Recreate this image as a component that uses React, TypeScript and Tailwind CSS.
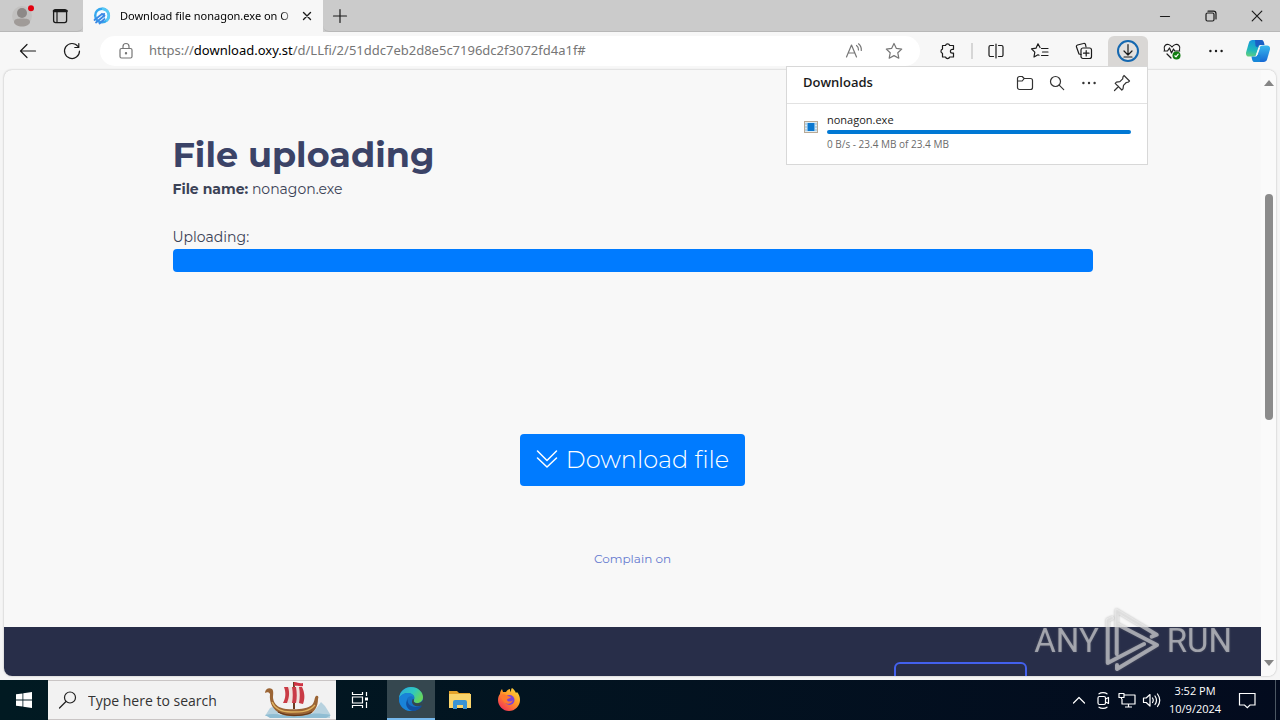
import type { ReactNode } from "react";

const stroke = {
  fill: "none",
  stroke: "currentColor",
  strokeWidth: 1.2,
  strokeLinecap: "round" as const,
  strokeLinejoin: "round" as const,
};

const Icon = ({ children, className = "size-5" }: { children: ReactNode; className?: string }) => (
  <svg viewBox="0 0 20 20" className={className} {...stroke} aria-hidden="true">
    {children}
  </svg>
);

const ToolButton = ({ label, children }: { label: string; children: ReactNode }) => (
  <button aria-label={label} className="flex h-8 w-11 shrink-0 items-center justify-center">
    {children}
  </button>
);

const Dots = () => (
  <Icon>
    <g fill="currentColor" stroke="none">
      <circle cx="4.4" cy="10" r="1.2" />
      <circle cx="10" cy="10" r="1.2" />
      <circle cx="15.6" cy="10" r="1.2" />
    </g>
  </Icon>
);

const TabBar = () => (
  <header className="flex h-8 shrink-0 bg-[#cbcbcb] text-[#1b1b1b]">
    <div className="flex w-[83px] items-center rounded-br-md border-b border-[#b8b8b8]">
      <button aria-label="Profile" className="ml-3 w-6">
        <svg viewBox="0 0 24 24" className="h-6 w-6" aria-hidden="true">
          <circle cx="10" cy="12" r="10" fill="#c2c1c0" />
          <circle cx="10" cy="9" r="5" fill="#8d8987" />
          <path d="M2 18c0-3 3-3.500 8-3.500s8 .5 8 3.500c0 2.500-4 4.500-8 4.500S2 20.500 2 18Z" fill="#a09b98" />
          <circle cx="19" cy="4.200" r="3" fill="#e3000f" />
        </svg>
      </button>
      <button aria-label="Tab actions" className="ml-3.5">
        <Icon>
          <rect x="3.600" y="3.600" width="13" height="13" rx="2" strokeWidth="1.300" />
          <path d="M4 5h12.500" strokeWidth="2.600" />
          <path d="M7 6v10" />
        </Icon>
      </button>
    </div>
    <div className="flex w-60 items-center bg-[#f7f7f7] pl-2.5">
      <svg viewBox="0 0 18 18" className="size-[18px]" aria-hidden="true">
        <circle cx="9" cy="8.500" r="6.800" fill="#f3fbff" stroke="#35a8ee" strokeWidth="2.400" />
        <path d="M9 1.700a6.800 6.800 0 0 1 4 12.300" fill="none" stroke="#55c8f5" strokeWidth="2.400" />
        <path d="M1.500 13 9 7M3 15.500l8.500-7M6.500 16.500l5-4.500" stroke="#3c88e4" strokeWidth="1.800" strokeLinecap="round" />
        <path d="m8 6.500 4-.5L11.500 11Z" fill="#3c88e4" />
      </svg>
      <span className="ml-2 w-[176px] overflow-hidden pl-px font-['Noto_Sans'] text-[11px] whitespace-nowrap text-black [mask-image:linear-gradient(to_right,black_92%,transparent)]">
        Download file nonagon.exe on O
      </span>
      <button aria-label="Close tab" className="ml-0.5">
        <Icon>
          <path d="m6.500 6.500 7 7m0-7-7 7" strokeWidth="1.400" />
        </Icon>
      </button>
    </div>
    <div className="flex flex-1 items-center rounded-bl-md border-b border-[#b8b8b8]">
      <button aria-label="New tab" className="ml-[7px]">
        <Icon>
          <path d="M10 3.500v13M3.500 10h13" />
        </Icon>
      </button>
      <div className="ml-auto flex">
        <button aria-label="Minimize" className="flex w-[46px] justify-center">
          <Icon>
            <path d="M5.500 10.500h9" />
          </Icon>
        </button>
        <button aria-label="Restore" className="flex w-[46px] justify-center">
          <Icon>
            <rect x="5" y="7" width="8" height="8" rx="1.500" />
            <path d="M7 5.200h5.500a2.500 2.500 0 0 1 2.500 2.500V13" />
          </Icon>
        </button>
        <button aria-label="Close" className="flex w-[46px] justify-center">
          <Icon>
            <path d="m5.200 5.200 9.600 9.600m0-9.600-9.600 9.600" />
          </Icon>
        </button>
      </div>
    </div>
  </header>
);

const DownloadsPanel = () => (
  <section
    aria-label="Downloads"
    className="absolute top-[30px] right-0 z-10 w-[362px] border border-[#d8d8d8] bg-white text-left text-[#1b1b1b]"
  >
    <div className="flex h-[37px] items-center border-b border-[#e2e2e2] pr-[15px] pb-1 pl-4">
      <h2 className="flex-1 text-[13px] font-semibold">Downloads</h2>
      <div className="flex gap-3 text-[#333]">
        <button aria-label="Open downloads folder">
          <Icon>
            <path d="M2.500 5.500a2 2 0 0 1 2-2h2.700l2 2h6.300a2 2 0 0 1 2 2v7a2 2 0 0 1-2 2h-11a2 2 0 0 1-2-2ZM2.500 8h4.700l2-2.500" />
          </Icon>
        </button>
        <button aria-label="Search downloads">
          <Icon>
            <circle cx="8.500" cy="8.500" r="5" />
            <path d="m12.200 12.200 4.500 4.500" />
          </Icon>
        </button>
        <button aria-label="More options">
          <Dots />
        </button>
        <button aria-label="Pin downloads" className="pl-px">
          <Icon>
            <path d="m12 2.500 5.500 5.500-1.200 1.200-2 .3-2.800 2.800-.5 3.500-1.200 1.200-6.600-6.600 1.200-1.200 3.500-.5 2.800-2.800.3-2ZM6.500 13.500l-4 4" />
          </Icon>
        </button>
      </div>
    </div>
    <div className="flex items-start gap-2 pt-2 pr-4 pb-3 pl-4">
      <svg viewBox="0 0 16 14" className="mt-2 h-3.5 w-4" aria-hidden="true">
        <rect x="1.500" y="1.500" width="13" height="11" fill="#dcecf5" stroke="#b9a995" />
        <path d="M2 4h2M2 7h2M2 10h2M12 4h2M12 7h2M12 10h2" stroke="#8fb5cf" />
        <rect x="4.500" y="3" width="7" height="8" fill="#0b78d0" />
      </svg>
      <div className="flex-1">
        <p className="text-[11px] leading-4">nonagon.exe</p>
        <div role="progressbar" aria-label="nonagon.exe" aria-valuenow={100} className="mt-0.5 h-1 rounded-full bg-[#0078d4]" />
        <p className="mt-0.5 text-[10px] leading-4 text-[#6b6b6b]">0 B/s - 23.4 MB of 23.4 MB</p>
      </div>
    </div>
  </section>
);

const Toolbar = () => (
  <nav className="flex h-[38px] shrink-0 items-center bg-[#f7f7f7] pr-0.5 pl-1.5 text-[#1b1b1b]">
    <ToolButton label="Back">
      <Icon>
        <path d="M17.500 10h-15m6.500-6.500L2.500 10 9 16.500" />
      </Icon>
    </ToolButton>
    <ToolButton label="Refresh">
      <Icon>
        <path d="M16 5.500A7.500 7.500 0 1 0 17.500 10M16.800 2.500v4h-4" />
      </Icon>
    </ToolButton>
    <div className="mx-1.5 flex h-[30px] flex-1 items-center rounded-full bg-white text-[#767676]">
      <button aria-label="Site information" className="ml-4">
        <Icon>
          <rect x="4" y="7.500" width="12" height="9.500" rx="1.500" />
          <path d="M7 7.500V5.500a3 3 0 0 1 6 0v2" />
          <circle cx="10" cy="12.200" r=".6" fill="currentColor" />
        </Icon>
      </button>
      <label className="relative ml-3 flex-1 pl-px font-['Noto_Sans'] text-[13px] whitespace-nowrap">
        <span>
          https://<span className="text-black">download.oxy.st</span>/d/LLfi/2/51ddc7eb2d8e5c7196dc2f3072fd4a1f#
        </span>
        <input type="text" aria-label="Address" className="absolute inset-0 bg-transparent outline-none" />
      </label>
      <button aria-label="Read aloud" className="mr-5">
        <Icon>
          <path d="M2.500 16 7.500 4l5 12M4.300 12h6.400M12.500 4.500a5 5 0 0 1 2 4.500M14.500 2.800a8 8 0 0 1 2.800 6.700" />
        </Icon>
      </button>
      <button aria-label="Add to favorites" className="mr-4">
        <Icon>
          <path d="m10 2.500 2.400 4.900 5.300.7-3.900 3.700 1 5.400-4.800-2.600-4.800 2.600 1-5.400-3.900-3.700 5.300-.7Z" />
        </Icon>
      </button>
    </div>
    <ToolButton label="Extensions">
      <Icon>
        <path d="M7.500 4.500a2.200 2.200 0 0 1 4.200 0h3.800v3.800h-1.200a1.900 1.900 0 0 0 0 3.800h1.200V16h-3.800a2.200 2.200 0 0 1-4.200 0H4.500v-3.700a2.200 2.200 0 0 1 0-4.200V4.500Z" />
      </Icon>
    </ToolButton>
    <div className="mx-px h-4 w-0.5 bg-[#d6d6d6]" />
    <ToolButton label="Split screen">
      <Icon>
        <path d="M10 3v14M7.500 4.500h-3a1.500 1.500 0 0 0-1.500 1.500v8a1.500 1.500 0 0 0 1.500 1.500h3M12.500 4.500h3A1.500 1.500 0 0 1 17 6v8a1.500 1.500 0 0 1-1.500 1.500h-3" />
      </Icon>
    </ToolButton>
    <ToolButton label="Favorites">
      <Icon>
        <path d="M11.500 7.500H18M12.500 11H18M11.500 14.500H18M10 6.500 8 2.800 6 7.200l-4.500.7 3.300 3.300L4 16l4-2.200 1 .5" />
      </Icon>
    </ToolButton>
    <ToolButton label="Collections">
      <Icon>
        <path d="M7 13.500 5 13l-2.500-7a1.500 1.500 0 0 1 1-2l6-1.500a1.500 1.500 0 0 1 2 1L12 6" />
        <rect x="7" y="7" width="10.500" height="10.500" rx="2" />
        <path d="M12.200 9.500v5.500M9.500 12.200H15" />
      </Icon>
    </ToolButton>
    <div className="relative mx-0.5">
      <button aria-label="Downloads" className="flex h-[30px] w-10 items-center justify-center rounded-t-md bg-[#d9d7d5]">
        <svg viewBox="0 0 24 24" className="size-6" {...stroke} aria-hidden="true">
          <circle cx="12" cy="12" r="10" fill="#e3e1df" stroke="#1568b0" strokeWidth="2" />
          <path d="M12 5.500v10M8 12l4 4 4-4M8 18h8" />
        </svg>
      </button>
      <DownloadsPanel />
    </div>
    <ToolButton label="Browser essentials">
      <Icon>
        <path d="M2.500 9C1 5 4 3 6.500 3.500 8.500 4 10 6 10 6s1.500-2 3.500-2.500C16 3 19 5 17.500 9M2 10h3.500l2-3 2 5 2-4 1.200 2h5M5 13l4 4" />
        <circle cx="14.500" cy="14.500" r="4" fill="#107c10" stroke="none" />
        <path d="m12.800 14.800 1.200 1 2.200-2.600" stroke="white" />
      </Icon>
    </ToolButton>
    <ToolButton label="Settings and more">
      <Dots />
    </ToolButton>
    <button aria-label="Copilot" className="flex w-10 justify-center">
      <svg viewBox="0 0 24 24" className="size-6" aria-hidden="true">
        <defs>
          <linearGradient id="pilotLeft" x1=".4" y1="0" x2=".2" y2="1">
            <stop offset="0" stopColor="#1593dc" />
            <stop offset=".6" stopColor="#20b9ba" />
            <stop offset="1" stopColor="#65cf7c" />
          </linearGradient>
          <linearGradient id="pilotRight" x1="0" y1="0" x2="0" y2="1">
            <stop offset="0" stopColor="#38b9ee" />
            <stop offset="1" stopColor="#1668d4" />
          </linearGradient>
        </defs>
        <path d="M6.500 1H15l-4.500 14c-.7 1.800-1.500 2.500-3.500 2.500H3c-2.500 0-3.500-2-2.800-4.500L2.800 4C3.500 1.800 4.500 1 6.500 1Z" fill="url(#pilotLeft)" />
        <path d="M9 1h6.500c2 0 2.500 2 3 5h-4c-1.500 0-2.500.8-3 2.500L9.500 7Z" fill="#1a5fc4" />
        <path d="M17.500 23H9l4.500-14c.7-1.800 1.500-2.500 3.500-2.500h4c2.500 0 3.500 2 2.800 4.500L21.200 20c-.7 2.200-1.700 3-3.700 3Z" fill="url(#pilotRight)" />
        <path d="M14 23H8.500c-2 0-2.500-2-3-5.500H9c1.500 0 2.500-.5 3-2l2.500 1Z" fill="#1787d8" />
        <path d="m12.500 8.500 1.500.5-2.500 7-1.500-.5Z" fill="#f7f7f7" />
      </svg>
    </button>
  </nav>
);

const Watermark = () => (
  <div
    aria-label="ANY RUN"
    className="pointer-events-none absolute right-11 bottom-1 flex items-center gap-1 pr-px font-['Roboto'] text-[33px] leading-none text-white/50 drop-shadow-[0_0_1px_#777]"
  >
    <span>ANY</span>
    <svg
      viewBox="0 0 60 64"
      className="h-16 w-[60px]"
      fill="none"
      stroke="currentColor"
      strokeWidth="4"
      strokeLinejoin="round"
      strokeLinecap="round"
      aria-hidden="true"
    >
      <path d="m48.700 28.700 5-2L13.700 2.700V46M13.700 16 54 37 14 61v-4M9 10l-4.300 2v43L41 36" />
    </svg>
    <span>RUN</span>
  </div>
);

const Page = () => (
  <div className="mx-1 mb-1 flex min-h-0 flex-1 overflow-hidden rounded-lg bg-[#f8f8f8] shadow-[0_0_2px_#aaa]">
    <div className="flex min-w-0 flex-1 flex-col font-['Montserrat','Inter',sans-serif]">
      <main className="mx-auto w-full max-w-[920px] flex-1 pt-[63px] text-[#3b4256]">
        <h1 className="text-[35px] leading-[44px] font-bold text-[#3b4367]">File uploading</h1>
        <p className="text-[14px] leading-6">
          <b>File name:</b> nonagon.exe
        </p>
        <p className="mt-6 text-[14px] leading-6">Uploading:</p>
        <div role="progressbar" aria-label="Uploading" aria-valuenow={100} className="h-[23px] rounded-sm bg-[#007bff]" />
        <div className="mt-[162px] flex flex-col items-center">
          <a href="#" className="flex h-[52px] items-center gap-2 rounded-sm bg-[#007bff] px-4 text-[24px] font-light text-white">
            <svg viewBox="0 0 22 22" className="size-[22px]" {...stroke} strokeWidth="1.500" aria-hidden="true">
              <path d="m1.500 2 9.500 9.500L20.500 2M1.500 9l9.500 9 9.500-9" />
            </svg>
            Download file
          </a>
          <a href="#" className="mt-[61px] text-[12px] leading-6 text-[#6478cf]">
            Complain on
          </a>
        </div>
      </main>
      <footer className="relative h-[49px] shrink-0 bg-[#282e49]">
        <div className="h-full overflow-hidden pt-[35px]">
          <button aria-label="Contact" className="mr-[234px] ml-auto block h-10 w-[133px] rounded-md border-2 border-[#4361ee]" />
        </div>
        <div className="absolute inset-y-0 -right-4 w-64">
          <Watermark />
        </div>
      </footer>
    </div>
    <div className="flex w-[15px] flex-col items-center bg-[#fafafa] pt-2.5 pb-2.5">
      <svg viewBox="0 0 10 6" className="h-1.5 w-2.5 shrink-0" aria-hidden="true">
        <path d="M0 6 5 0l5 6Z" fill="#858585" />
      </svg>
      <div className="mt-[108px] h-[226px] w-2 rounded-full bg-[#8b8b8b]" />
      <svg viewBox="0 0 10 6" className="mt-auto h-1.5 w-2.5 shrink-0" aria-hidden="true">
        <path d="M0 0h10L5 6Z" fill="#858585" />
      </svg>
    </div>
  </div>
);

const Ship = () => (
  <svg viewBox="0 0 68 38" className="h-[38px] w-[68px] shrink-0" aria-hidden="true">
    <path d="m48 33 9-12 4 4 5 8v4H46ZM1 35l5-8 7-3 2 11Z" fill="#b7d2df" />
    <path d="M1 34c12-3 22 2 33 0s23-2 33 0l-5 3H6Z" fill="#8fbdd3" />
    <path d="M30 1v27" stroke="#6b3c20" strokeWidth="2" />
    <path d="M30 1c4 0 5 2 9 1v3c-3 1-5-1-9 0Z" fill="#ce3444" />
    <path d="M20 6c6 1 12-1 18 0 3 6 3 12 1 17-6-2-13-1-20-1 3-5 3-11 1-16Z" fill="#f0e1dc" />
    <path d="M20 6h4c2 6 1 11-1 16h-4c3-5 3-11 1-16ZM28 6h4c1 6 1 11 0 16h-4c1-5 1-11 0-16ZM35 6h3c3 6 3 12 1 17l-4-1c1-5 1-11 0-16Z" fill="#c93b46" />
    <path d="M1 12c0-4 4-6 7-4 2 2 1 6 1 9 1 7 6 10 13 11 11 1 21 0 26-4 3-3 2-7 4-9 2-1 3 1 2 3 0 8-4 13-8 15-10 3-23 3-29 0-8-4-12-11-11-20-1-2-3-2-5-1Z" fill="#9b6535" />
    <path d="M8 21c3 7 9 10 19 10s18 0 24-7" fill="none" stroke="#e0b461" strokeWidth="1.300" />
    <path d="M14 31c8 4 25 5 34 0" fill="none" stroke="#65391c" strokeWidth="1.300" />
  </svg>
);

const Taskbar = () => (
  <footer className="flex h-10 shrink-0 items-center bg-gradient-to-r from-[#011a22] to-[#030b1e] text-white">
    <button aria-label="Start" className="flex w-12 justify-center">
      <svg viewBox="0 0 16 16" className="size-4" fill="white" aria-hidden="true">
        <path d="m0 2.300 6.500-.9v6.200H0ZM7.300 1.300 16 0v7.600H7.300ZM0 8.400h6.500v6.200L0 13.700ZM7.300 8.400H16V16l-8.700-1.300Z" />
      </svg>
    </button>
    <label className="flex h-full w-72 items-center border-y border-[#c9c5c5] bg-[#f2f2f2] pr-1 pl-2.5 text-[#222]">
      <Icon>
        <circle cx="12" cy="7.500" r="5.500" />
        <path d="m8 11.500-6.500 6.500" />
      </Icon>
      <input
        type="search"
        aria-label="Search"
        placeholder="Type here to search"
        className="ml-2.5 min-w-0 flex-1 bg-transparent text-[14px] outline-none placeholder:text-[#333]"
      />
      <Ship />
    </label>
    <button aria-label="Task view" className="flex w-[51px] justify-center pr-1">
      <svg viewBox="0 0 18 18" className="size-[18px]" fill="none" stroke="white" strokeWidth="1.200" aria-hidden="true">
        <path d="M1.500 1v2.500h10V1M1.500 17v-2.500h10V17M1.500 6h10v6h-10ZM15.500 1v4M15.500 11v6" />
        <path d="M14 6.500h3v3h-3z" fill="white" stroke="none" />
      </svg>
    </button>
    <button aria-label="Microsoft Edge" className="flex h-full w-12 items-center justify-center border-b-2 border-[#76b9ed] bg-[#35474f]">
      <svg viewBox="0 0 24 24" className="size-6" aria-hidden="true">
        <defs>
          <linearGradient id="edgeTop" x1="0" y1="0" x2="1" y2=".5">
            <stop offset="0" stopColor="#2ba8df" />
            <stop offset=".6" stopColor="#30c8bd" />
            <stop offset="1" stopColor="#65d55d" />
          </linearGradient>
        </defs>
        <circle cx="12" cy="12" r="12" fill="#1672c5" />
        <path d="M0 11C1 4 6 0 12 0c7 0 12 5 12 10 0 4-3 6-6 6-3 0-4-1-3-3 2-4-2-7-6-7-4 0-7 2-9 5Z" fill="url(#edgeTop)" />
        <path d="M8 12c-2 6 1 10 6 12C7 25 0 20 0 12c1-4 5-6 9-6 3 0 6 2 6 5-2-3-6-2-7 1Z" fill="#1983d8" />
        <path d="M9 12c-2 5 5 10 12 7l2-.5c-2 4-6 5.500-9 5.500-6-1-9-7-5-12Z" fill="#124f9f" />
        <path d="M14 12c1 0 1 1 .8 1.600-.5 1.400 1 2.600 3.200 2.600 2.500 0 4.500-.8 6-3.200 0 2-.5 4-1.500 5.500-5 2-9.500-.5-9.500-3.500 0-1.500.3-2.500 1-3Z" fill="#35474f" />
      </svg>
    </button>
    <button aria-label="File Explorer" className="flex w-[50px] justify-center">
      <svg viewBox="0 0 24 20" className="h-5 w-6" aria-hidden="true">
        <path d="M1 1h8l2 2h11v4H1Z" fill="#e5a32a" />
        <path d="M1 4h22v14H1Z" fill="#fad46b" />
        <path d="M5 19v-7a2 2 0 0 1 2-2h10a2 2 0 0 1 2 2v7h-4v-4H9v4Z" fill="#3993d4" />
      </svg>
    </button>
    <button aria-label="Firefox" className="flex w-12 justify-center">
      <svg viewBox="0 0 24 24" className="size-6" aria-hidden="true">
        <defs>
          <linearGradient id="fox" x1="1" y1="0" x2=".2" y2="1">
            <stop offset="0" stopColor="#ffe43f" />
            <stop offset=".5" stopColor="#ff9727" />
            <stop offset="1" stopColor="#f42c59" />
          </linearGradient>
        </defs>
        <path d="M3 6c0-2 1-4 2-5l1 3h3c1-2 3-3 4-3 0 1 0 2 1 3 0-2 0-3 1-4 2 1 3 3 4 5l1-1c2 2 3 5 3 8 0 6-5 11-11 11S1 18 1 12c0-3 1-5 2-6Z" fill="url(#fox)" />
        <circle cx="12.500" cy="12" r="5" fill="#7b43d6" />
        <path d="M4 7c3-2 5 0 7 1l3 1c-1 2-4 1-4 3 1 2 4 2 6 0-1 4-6 5-9 2-2-2-3-4-3-7Z" fill="#ff7a2e" />
      </svg>
    </button>
    <div className="ml-auto flex h-full items-center">
      <button aria-label="Show hidden icons" className="mr-1">
        <Icon>
          <path d="m4.500 13 5.500-5.500 5.500 5.500" />
        </Icon>
      </button>
      <button aria-label="Meet Now" className="mr-1">
        <Icon>
          <rect x="5" y="6.500" width="7.500" height="8" rx="1.500" />
          <path d="m12.500 9 3-1.500v6l-3-1.500M6 3.800c2-1.600 6-1.600 8 0M6 17.200c2 1.600 6 1.600 8 0" />
        </Icon>
      </button>
      <button aria-label="Network" className="mr-1">
        <Icon>
          <path d="M7.500 5H18v9H5V9M11.500 14v3M8 17h7M2 3.500h5v4H2ZM4.500 7.500V9" strokeLinecap="butt" />
        </Icon>
      </button>
      <button aria-label="Volume" className="mr-2">
        <Icon>
          <path d="M2.500 8v4.500h2.700L9 16V4.500L5.200 8ZM11.500 8q1.500 2.200 0 4.500M14 6q3 4.200 0 8.500M16.500 4q4.500 6.200 0 12.500" />
        </Icon>
      </button>
      <time dateTime="2024-10-09T15:52" className="w-[52px] text-center text-[11px] leading-[18px] whitespace-nowrap">
        3:52 PM
        <br />
        10/9/2024
      </time>
      <button aria-label="Notifications" className="ml-4">
        <Icon>
          <path d="M2.500 3.500h15.500v11.500h-5l-2.700 2.700L7.500 15h-5Z" strokeLinejoin="miter" />
        </Icon>
      </button>
      <div className="ml-[18px] h-full w-[5px] border-l border-[#4c5763]" />
    </div>
  </footer>
);

const App = () => (
  <div className="flex h-screen flex-col overflow-hidden bg-[#f5f5f5] font-['Open_Sans','Noto_Sans',sans-serif]">
    <TabBar />
    <Toolbar />
    <Page />
    <Taskbar />
  </div>
);

export default App;
